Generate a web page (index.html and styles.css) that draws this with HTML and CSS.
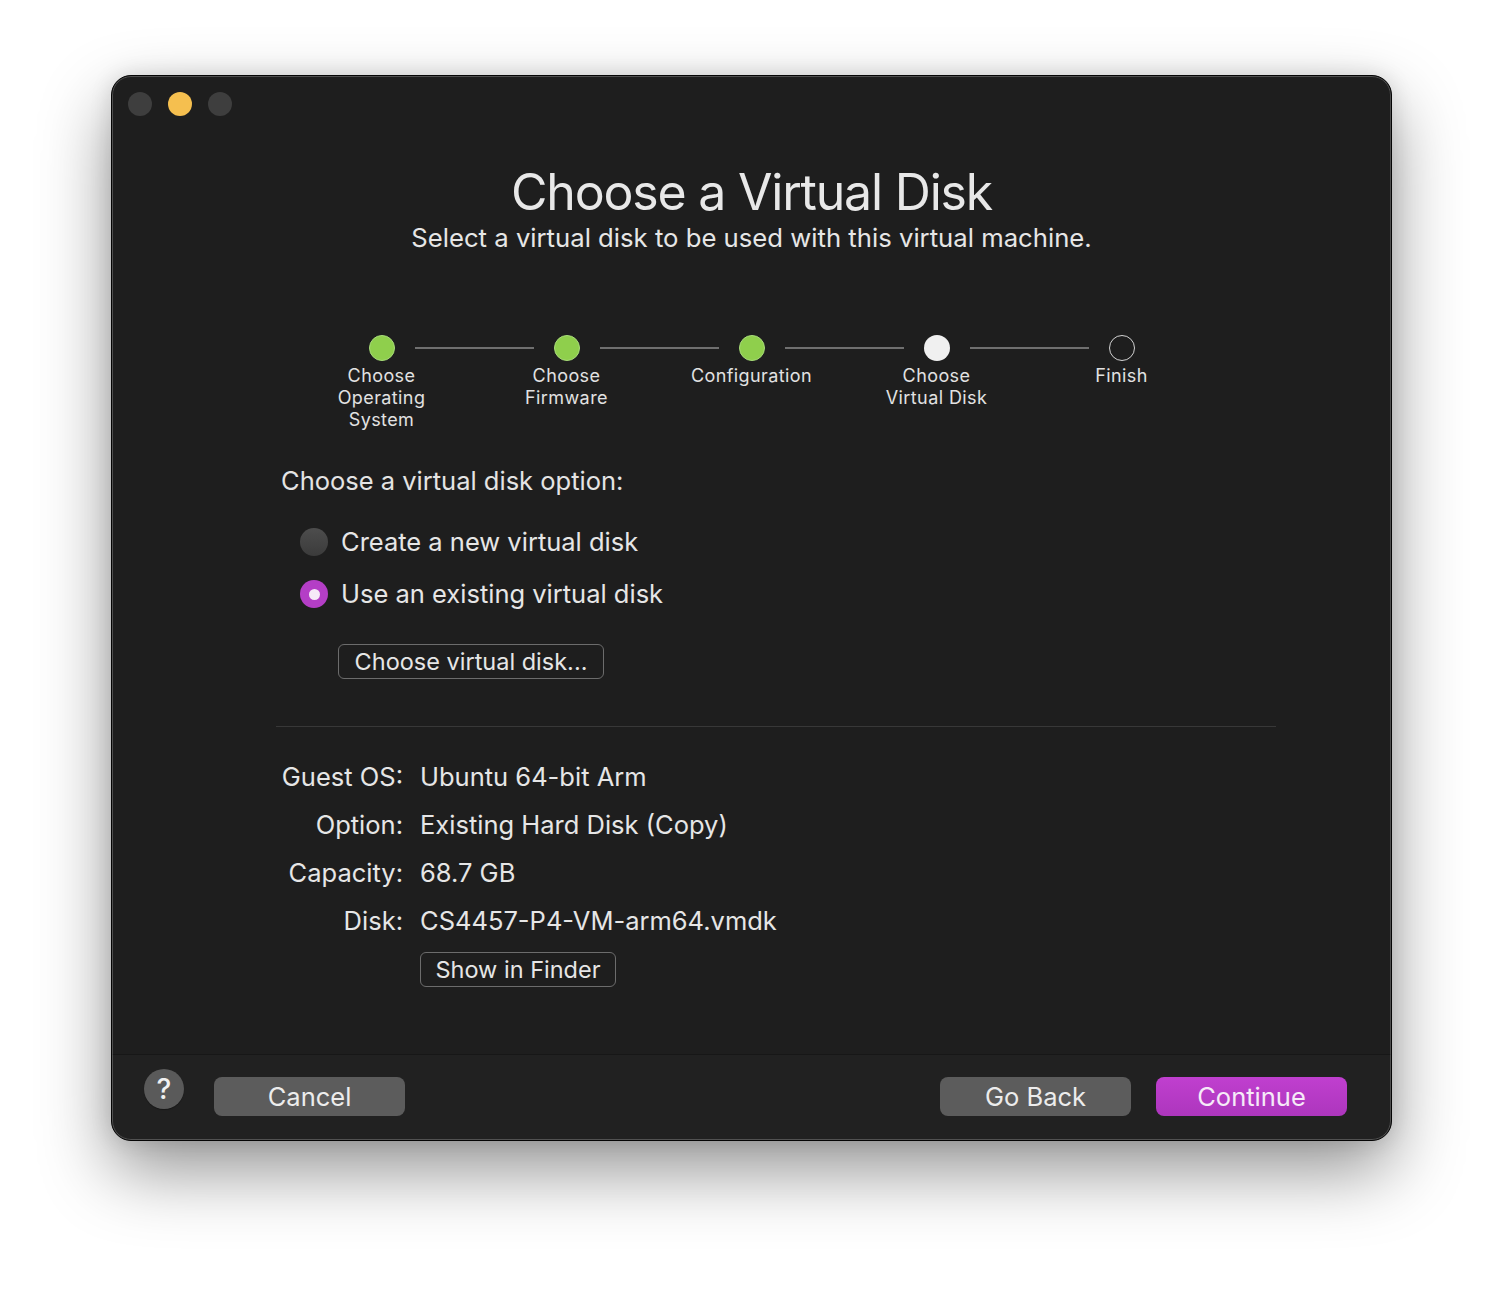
FILE: index.html
```html
<!DOCTYPE html>
<html lang="en">
<head>
<meta charset="utf-8">
<title>Choose a Virtual Disk</title>
<link rel="stylesheet" href="styles.css">
</head>
<body>
<div class="window">
  <div class="titlebar">
    <span class="light light-gray"></span>
    <span class="light light-yellow"></span>
    <span class="light light-gray"></span>
  </div>
  <div class="main">
    <header class="heading">
      <h1 class="title">Choose a Virtual Disk</h1>
      <p class="subtitle">Select a virtual disk to be used with this virtual machine.</p>
    </header>

    <ol class="steps">
      <li class="step step-first">
        <div class="step-track"><span class="seg"></span><span class="dot dot-done"></span><span class="seg"></span></div>
        <div class="step-label">Choose<br>Operating<br>System</div>
      </li>
      <li class="step">
        <div class="step-track"><span class="seg"></span><span class="dot dot-done"></span><span class="seg"></span></div>
        <div class="step-label">Choose<br>Firmware</div>
      </li>
      <li class="step">
        <div class="step-track"><span class="seg"></span><span class="dot dot-done"></span><span class="seg"></span></div>
        <div class="step-label">Configuration</div>
      </li>
      <li class="step">
        <div class="step-track"><span class="seg"></span><span class="dot dot-current"></span><span class="seg"></span></div>
        <div class="step-label">Choose<br>Virtual Disk</div>
      </li>
      <li class="step step-last">
        <div class="step-track"><span class="seg"></span><span class="dot dot-todo"></span><span class="seg"></span></div>
        <div class="step-label">Finish</div>
      </li>
    </ol>

    <section class="options">
      <div class="options-title">Choose a virtual disk option:</div>
      <div class="radio-row"><span class="radio"></span><span class="radio-text">Create a new virtual disk</span></div>
      <div class="radio-row"><span class="radio radio-on"></span><span class="radio-text">Use an existing virtual disk</span></div>
      <div class="choose-row"><span class="btn-outline btn-choose">Choose virtual disk...</span></div>
    </section>

    <div class="divider"></div>

    <section class="info">
      <div class="info-label">Guest OS:</div><div class="info-value">Ubuntu 64-bit Arm</div>
      <div class="info-label">Option:</div><div class="info-value">Existing Hard Disk (Copy)</div>
      <div class="info-label">Capacity:</div><div class="info-value">68.7 GB</div>
      <div class="info-label">Disk:</div><div class="info-value">CS4457-P4-VM-arm64.vmdk</div>
      <div class="info-label"></div><div class="info-value info-btn"><span class="btn-outline btn-finder">Show in Finder</span></div>
    </section>
  </div>
  <footer class="footer">
    <span class="help">?</span>
    <span class="btn btn-gray btn-cancel">Cancel</span>
    <span class="spacer"></span>
    <span class="btn btn-gray">Go Back</span>
    <span class="btn btn-primary">Continue</span>
  </footer>
</div>
</body>
</html>
```

FILE: styles.css
```css
* { box-sizing: border-box; }

html, body {
  margin: 0;
  padding: 0;
  background: #ffffff;
}

body {
  min-height: 1290px;
  padding: 75px 0 0 111px;
  font-family: Inter, "Noto Sans", "Liberation Sans", sans-serif;
  color: #e4e4e4;
}

.window {
  position: relative;
  width: 1281px;
  height: 1066px;
  background: #1e1e1e;
  border: 1px solid #050505;
  border-radius: 20px;
  display: flex;
  flex-direction: column;
  overflow: hidden;
  box-shadow: 0 30px 70px rgba(0, 0, 0, 0.42), 0 0 22px rgba(0, 0, 0, 0.12);
}

.window::after {
  content: "";
  position: absolute;
  inset: 0;
  border-radius: 19px;
  border: 1px solid rgba(255, 255, 255, 0.22);
  pointer-events: none;
}

.titlebar {
  display: flex;
  gap: 16px;
  padding: 16px 0 0 16px;
  height: 60px;
  flex: none;
}

.light {
  width: 24px;
  height: 24px;
  border-radius: 50%;
}
.light-gray { background: #3e3e3e; }
.light-yellow { background: #f5bf4f; }

.main {
  flex: 1;
  display: flex;
  flex-direction: column;
}

.heading {
  text-align: center;
  margin-top: 27px;
}

.title {
  margin: 0;
  font-size: 50px;
  font-weight: 400;
  line-height: 58px;
  letter-spacing: -1.2px;
  color: #e8e8e8;
}

.subtitle {
  margin: 0;
  font-size: 25.7px;
  line-height: 34px;
  color: #e6e6e6;
}

.steps {
  list-style: none;
  margin: 80px 0 0 0;
  padding: 0;
  display: flex;
  justify-content: center;
}

.step {
  width: 185px;
  display: flex;
  flex-direction: column;
  align-items: center;
}

.step-track {
  width: 100%;
  display: flex;
  align-items: center;
  height: 26px;
}

.seg {
  flex: 1;
  height: 2px;
  background: #6f6f6f;
}
.step-track .seg:first-child { margin-right: 20px; }
.step-track .seg:last-child { margin-left: 20px; }
.step-first .seg:first-child,
.step-last .seg:last-child { background: transparent; }

.dot {
  width: 26px;
  height: 26px;
  border-radius: 50%;
  flex: none;
}
.dot-done { background: #8fcf4c; border: 1px solid #a9dd7a; }
.dot-current { background: #f0f0f0; }
.dot-todo { border: 1.5px solid #d2d2d2; }

.step-label {
  margin-top: 4px;
  font-size: 18px;
  line-height: 22px;
  letter-spacing: 0.4px;
  text-align: center;
  color: #e2e2e2;
}

.options {
  margin: 33px 0 0 169px;
}

.options-title {
  font-size: 25.5px;
  line-height: 34px;
}

.radio-row {
  display: flex;
  align-items: center;
  gap: 13px;
  margin-left: 19px;
  height: 52px;
}

.options-title + .radio-row { margin-top: 18px; }

.radio {
  width: 28px;
  height: 28px;
  border-radius: 50%;
  background: linear-gradient(#4d4d4d, #3b3b3b);
  flex: none;
  display: flex;
  align-items: center;
  justify-content: center;
}
.radio-on {
  background: #b43ec6;
}
.radio-on::before {
  content: "";
  width: 11px;
  height: 11px;
  border-radius: 50%;
  background: #f6eaf8;
}

.radio-text {
  font-size: 25.5px;
  line-height: 34px;
  color: #e6e6e6;
}

.choose-row {
  margin: 24px 0 0 57px;
}

.btn-outline {
  display: inline-flex;
  align-items: center;
  justify-content: center;
  height: 35px;
  padding: 0 14px;
  border: 1.5px solid #6c6c6c;
  border-radius: 6px;
  font-size: 23.5px;
  color: #e6e6e6;
}
.btn-choose { width: 266px; }
.btn-finder { width: 196px; }

.divider {
  height: 1px;
  background: #383838;
  margin: 47px 115px 0 164px;
}

.info {
  display: grid;
  grid-template-columns: 122px auto;
  column-gap: 17px;
  margin: 33px 0 0 169px;
  font-size: 25.5px;
}

.info-label {
  text-align: right;
  height: 48px;
  line-height: 34px;
  white-space: nowrap;
  color: #e6e6e6;
}

.info-value {
  height: 48px;
  line-height: 34px;
  color: #e6e6e6;
}
.info-btn { line-height: normal; margin-top: 0; }

.footer {
  flex: none;
  height: 86px;
  background: #212121;
  border-top: 1px solid #171717;
  display: flex;
  align-items: flex-start;
  padding: 22px 44px 0 32px;
}

.help {
  width: 40px;
  height: 40px;
  border-radius: 50%;
  background: #5a5a5a;
  color: #f0f0f0;
  font-size: 28px;
  font-weight: 500;
  display: flex;
  align-items: center;
  justify-content: center;
  margin-top: -8px;
  margin-right: 30px;
  box-shadow: 0 1px 1px rgba(0,0,0,0.3);
}

.spacer { flex: 1; }

.btn {
  width: 191px;
  height: 39px;
  border-radius: 8px;
  font-size: 25.5px;
  display: flex;
  align-items: center;
  justify-content: center;
  color: #ececec;
}
.btn-gray { background: #5c5c5c; }
.btn-primary { background: linear-gradient(#c03fcf, #ad36bd); margin-left: 25px; color: #f6eaf8; }
```
